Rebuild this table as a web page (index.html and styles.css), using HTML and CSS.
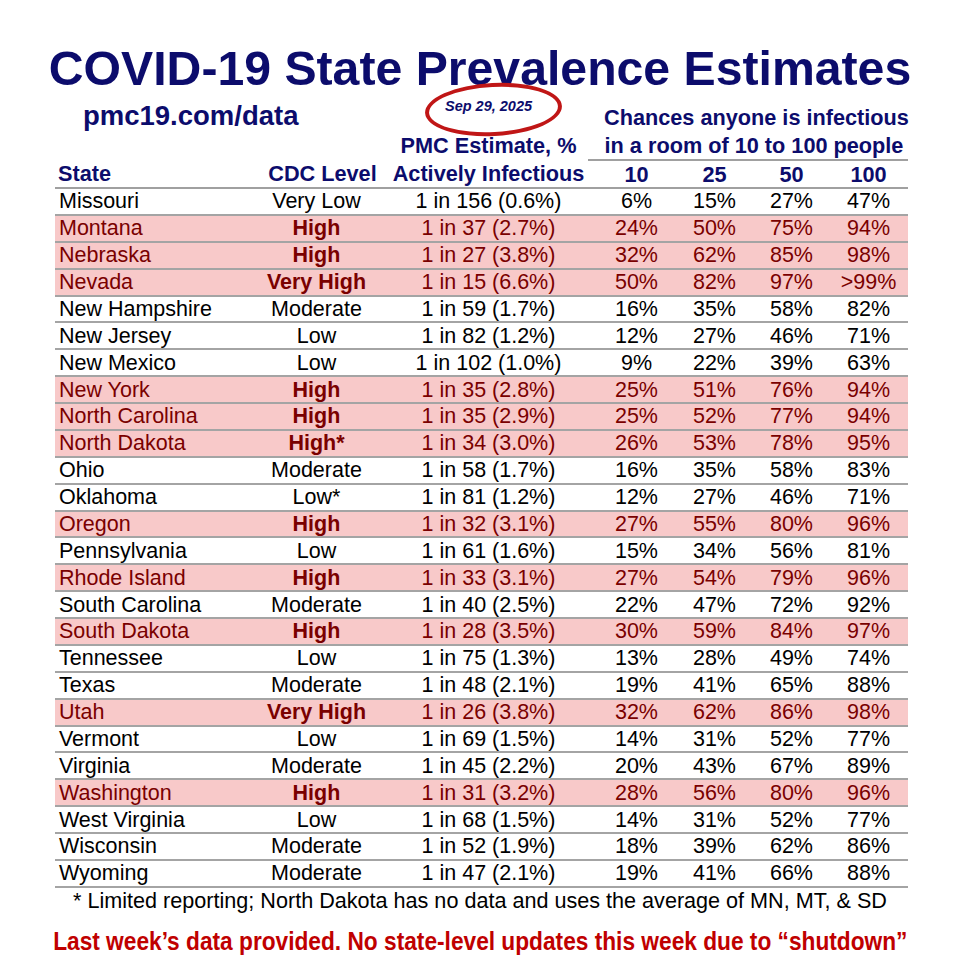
FILE: index.html
```html
<!DOCTYPE html>
<html lang="en">
<head>
<meta charset="utf-8">
<title>COVID-19 State Prevalence Estimates</title>
<link rel="stylesheet" href="styles.css">
</head>
<body>
<div class="page">
  <h1 class="title">COVID-19 State Prevalence Estimates</h1>
  <table class="grid">
    <colgroup>
      <col class="c-state"><col class="c-cdc"><col class="c-pmc"><col class="c-10"><col class="c-25"><col class="c-50"><col class="c-100">
    </colgroup>
    <thead>
      <tr class="hrow-a">
        <th colspan="2" class="site">pmc19.com/data</th>
        <th class="date-cell"><span class="oval"></span><span class="date">Sep 29, 2025</span></th>
        <th colspan="4" class="chances">Chances anyone is infectious</th>
      </tr>
      <tr class="hrow-b">
        <th colspan="2"></th>
        <th class="pmc">PMC Estimate, %</th>
        <th colspan="4" class="room">in a room of 10 to 100 people</th>
      </tr>
      <tr class="hrow-c">
        <th class="left">State</th>
        <th class="cdc">CDC Level</th>
        <th class="pmc">Actively Infectious</th>
        <th>10</th><th>25</th><th>50</th><th class="last">100</th>
      </tr>
    </thead>
    <tbody>
      <tr><td>Missouri</td><td>Very Low</td><td>1 in 156 (0.6%)</td><td>6%</td><td>15%</td><td>27%</td><td>47%</td></tr>
      <tr class="hi"><td>Montana</td><td><b>High</b></td><td>1 in 37 (2.7%)</td><td>24%</td><td>50%</td><td>75%</td><td>94%</td></tr>
      <tr class="hi"><td>Nebraska</td><td><b>High</b></td><td>1 in 27 (3.8%)</td><td>32%</td><td>62%</td><td>85%</td><td>98%</td></tr>
      <tr class="hi"><td>Nevada</td><td><b>Very High</b></td><td>1 in 15 (6.6%)</td><td>50%</td><td>82%</td><td>97%</td><td>&gt;99%</td></tr>
      <tr><td>New Hampshire</td><td>Moderate</td><td>1 in 59 (1.7%)</td><td>16%</td><td>35%</td><td>58%</td><td>82%</td></tr>
      <tr><td>New Jersey</td><td>Low</td><td>1 in 82 (1.2%)</td><td>12%</td><td>27%</td><td>46%</td><td>71%</td></tr>
      <tr><td>New Mexico</td><td>Low</td><td>1 in 102 (1.0%)</td><td>9%</td><td>22%</td><td>39%</td><td>63%</td></tr>
      <tr class="hi"><td>New York</td><td><b>High</b></td><td>1 in 35 (2.8%)</td><td>25%</td><td>51%</td><td>76%</td><td>94%</td></tr>
      <tr class="hi"><td>North Carolina</td><td><b>High</b></td><td>1 in 35 (2.9%)</td><td>25%</td><td>52%</td><td>77%</td><td>94%</td></tr>
      <tr class="hi"><td>North Dakota</td><td><b>High*</b></td><td>1 in 34 (3.0%)</td><td>26%</td><td>53%</td><td>78%</td><td>95%</td></tr>
      <tr><td>Ohio</td><td>Moderate</td><td>1 in 58 (1.7%)</td><td>16%</td><td>35%</td><td>58%</td><td>83%</td></tr>
      <tr><td>Oklahoma</td><td>Low*</td><td>1 in 81 (1.2%)</td><td>12%</td><td>27%</td><td>46%</td><td>71%</td></tr>
      <tr class="hi"><td>Oregon</td><td><b>High</b></td><td>1 in 32 (3.1%)</td><td>27%</td><td>55%</td><td>80%</td><td>96%</td></tr>
      <tr><td>Pennsylvania</td><td>Low</td><td>1 in 61 (1.6%)</td><td>15%</td><td>34%</td><td>56%</td><td>81%</td></tr>
      <tr class="hi"><td>Rhode Island</td><td><b>High</b></td><td>1 in 33 (3.1%)</td><td>27%</td><td>54%</td><td>79%</td><td>96%</td></tr>
      <tr><td>South Carolina</td><td>Moderate</td><td>1 in 40 (2.5%)</td><td>22%</td><td>47%</td><td>72%</td><td>92%</td></tr>
      <tr class="hi"><td>South Dakota</td><td><b>High</b></td><td>1 in 28 (3.5%)</td><td>30%</td><td>59%</td><td>84%</td><td>97%</td></tr>
      <tr><td>Tennessee</td><td>Low</td><td>1 in 75 (1.3%)</td><td>13%</td><td>28%</td><td>49%</td><td>74%</td></tr>
      <tr><td>Texas</td><td>Moderate</td><td>1 in 48 (2.1%)</td><td>19%</td><td>41%</td><td>65%</td><td>88%</td></tr>
      <tr class="hi"><td>Utah</td><td><b>Very High</b></td><td>1 in 26 (3.8%)</td><td>32%</td><td>62%</td><td>86%</td><td>98%</td></tr>
      <tr><td>Vermont</td><td>Low</td><td>1 in 69 (1.5%)</td><td>14%</td><td>31%</td><td>52%</td><td>77%</td></tr>
      <tr><td>Virginia</td><td>Moderate</td><td>1 in 45 (2.2%)</td><td>20%</td><td>43%</td><td>67%</td><td>89%</td></tr>
      <tr class="hi"><td>Washington</td><td><b>High</b></td><td>1 in 31 (3.2%)</td><td>28%</td><td>56%</td><td>80%</td><td>96%</td></tr>
      <tr><td>West Virginia</td><td>Low</td><td>1 in 68 (1.5%)</td><td>14%</td><td>31%</td><td>52%</td><td>77%</td></tr>
      <tr><td>Wisconsin</td><td>Moderate</td><td>1 in 52 (1.9%)</td><td>18%</td><td>39%</td><td>62%</td><td>86%</td></tr>
      <tr><td>Wyoming</td><td>Moderate</td><td>1 in 47 (2.1%)</td><td>19%</td><td>41%</td><td>66%</td><td>88%</td></tr>
    </tbody>
  </table>
  <p class="note">* Limited reporting; North Dakota has no data and uses the average of MN, MT, &amp; SD</p>
  <p class="shutdown"><span class="squeeze">Last week’s data provided. No state-level updates this week due to “shutdown”</span></p>
</div>
</body>
</html>
```

FILE: styles.css
```css
html, body {
  margin: 0;
  padding: 0;
  background: #ffffff;
}
body {
  font-family: "Liberation Sans", Arial, sans-serif;
  color: #000;
}
.page {
  width: 960px;
  height: 960px;
  box-sizing: border-box;
  padding: 43px 0 0 0;
  display: flex;
  flex-direction: column;
  align-items: center;
}
.title {
  margin: 0;
  font-size: 48.2px;
  line-height: 51px;
  font-weight: bold;
  color: #0c0c6c;
}
.grid {
  width: 853px;
  margin-left: 3px;
  border-collapse: collapse;
  table-layout: fixed;
  font-size: 21.5px;
}
.c-state { width: 194px; }
.c-cdc { width: 135px; }
.c-pmc { width: 204px; }
.c-10 { width: 97px; }
.c-25 { width: 59px; }
.c-50 { width: 95px; }
.c-100 { width: 69px; }

thead th {
  color: #0c0c6c;
  font-weight: bold;
  font-size: 21.7px;
  padding: 0;
  text-align: center;
  white-space: nowrap;
}
.hrow-a th {
  height: 38px;
  vertical-align: bottom;
  line-height: 24px;
}
.hrow-a .site {
  height: 30px;
  text-align: left;
  padding-left: 28px;
  padding-top: 8px;
  font-size: 27.5px;
  line-height: 28px;
  vertical-align: top;
}
.hrow-a .chances {
  height: 36px;
  padding-bottom: 2px;
  padding-left: 16px;
}
.date-cell { position: relative; }
.oval {
  position: absolute;
  left: 41px;
  top: -11px;
  width: 137px;
  height: 53px;
  box-sizing: border-box;
  border: 4.5px solid #c01616;
  border-radius: 50%;
  transform: rotate(-3deg);
}
.date {
  position: absolute;
  left: 61px;
  top: 4px;
  font-size: 14.5px;
  line-height: 16px;
  font-style: italic;
  font-weight: bold;
  color: #0c0c6c;
}
.hrow-b th {
  height: 27px;
  line-height: 24px;
  vertical-align: middle;
}
.hrow-b .room {
  border-bottom: 2px solid #a0a0a0;
  padding-left: 12px;
}
.hrow-c th {
  height: 25px;
  border-bottom: 2px solid #a0a0a0;
  line-height: 24px;
  padding-top: 1px;
  vertical-align: middle;
}
.hrow-c th.left { text-align: left; padding-left: 3px; }
.hrow-c th.cdc { padding-left: 12px; }
thead th.pmc { padding-left: 5px; }
thead th.last { padding-right: 10px; }

tbody td {
  height: 24.88px;
  padding: 0;
  text-align: center;
  border-bottom: 2px solid #a4a4a4;
  line-height: 24px;
  white-space: nowrap;
}
tbody td:first-child {
  text-align: left;
  padding-left: 4px;
}
tbody td:nth-child(3) { padding-left: 5px; }
tbody td:last-child { padding-right: 10px; }
tbody tr.hi td {
  background: #f8c9c9;
  color: #7a0000;
}

.note {
  margin: 0;
  font-size: 21.6px;
  line-height: 26px;
}
.shutdown {
  margin: 13px 0 0 0;
  font-weight: bold;
  font-size: 26px;
  line-height: 28px;
  color: #c00000;
  white-space: nowrap;
}
.squeeze {
  display: inline-block;
  transform: scaleX(0.873);
}
```
